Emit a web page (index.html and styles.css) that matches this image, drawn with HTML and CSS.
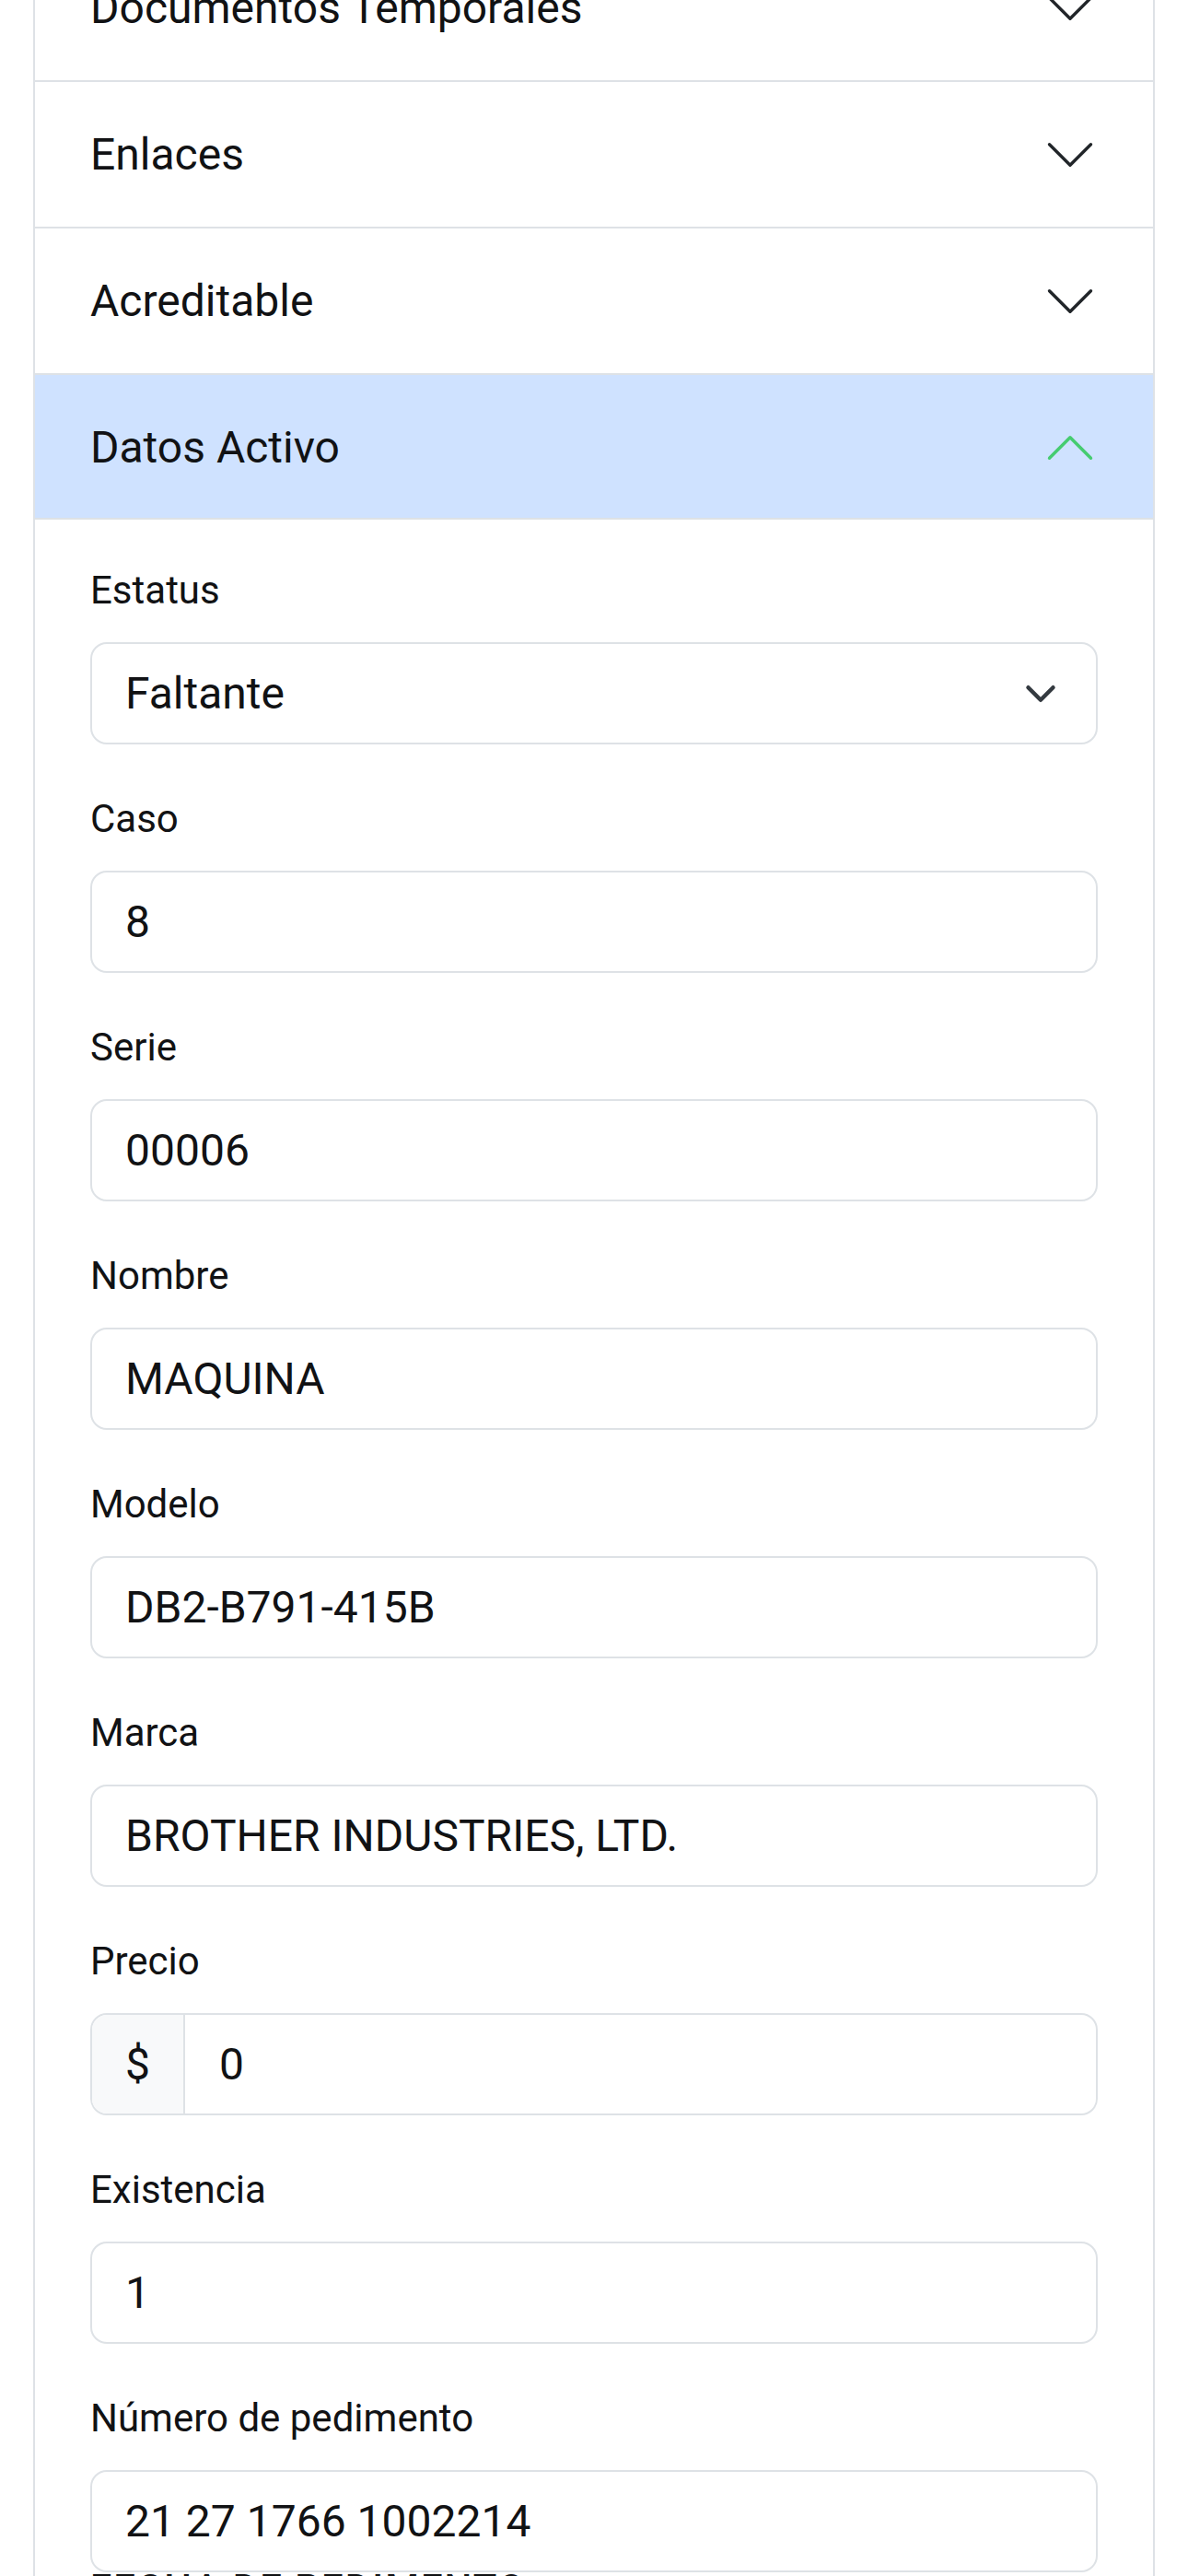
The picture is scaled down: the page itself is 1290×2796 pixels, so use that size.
FILE: index.html
```html
<!DOCTYPE html>
<html lang="es">
<head>
<meta charset="utf-8">
<title>Datos Activo</title>
<link rel="stylesheet" href="styles.css">
</head>
<body>
<div class="accordion">
  <div class="acc-item">
    <button class="acc-header"><span>Documentos Temporales</span>
      <svg class="chev" viewBox="0 0 16 16" fill="none" stroke="#212529" stroke-width="0.9" stroke-linecap="round" stroke-linejoin="round"><path d="M2 5L8 11L14 5"/></svg>
    </button>
  </div>
  <div class="acc-item">
    <button class="acc-header"><span>Enlaces</span>
      <svg class="chev" viewBox="0 0 16 16" fill="none" stroke="#212529" stroke-width="0.9" stroke-linecap="round" stroke-linejoin="round"><path d="M2 5L8 11L14 5"/></svg>
    </button>
  </div>
  <div class="acc-item">
    <button class="acc-header"><span>Acreditable</span>
      <svg class="chev" viewBox="0 0 16 16" fill="none" stroke="#212529" stroke-width="0.9" stroke-linecap="round" stroke-linejoin="round"><path d="M2 5L8 11L14 5"/></svg>
    </button>
  </div>
  <div class="acc-item open">
    <button class="acc-header active"><span>Datos Activo</span>
      <svg class="chev" viewBox="0 0 16 16" fill="none" stroke="#45cc70" stroke-width="0.9" stroke-linecap="round" stroke-linejoin="round"><path d="M2 11L8 5L14 11"/></svg>
    </button>
    <div class="acc-body">
      <div class="field">
        <label class="field-label">Estatus</label>
        <div class="control select"><span>Faltante</span>
          <svg class="select-arrow" viewBox="0 0 16 16" fill="none" stroke="#343a40" stroke-width="2" stroke-linecap="round" stroke-linejoin="round"><path d="m2 5 6 6 6-6"/></svg>
        </div>
      </div>
      <div class="field">
        <label class="field-label">Caso</label>
        <div class="control">8</div>
      </div>
      <div class="field">
        <label class="field-label">Serie</label>
        <div class="control">00006</div>
      </div>
      <div class="field">
        <label class="field-label">Nombre</label>
        <div class="control">MAQUINA</div>
      </div>
      <div class="field">
        <label class="field-label">Modelo</label>
        <div class="control">DB2-B791-415B</div>
      </div>
      <div class="field">
        <label class="field-label">Marca</label>
        <div class="control">BROTHER INDUSTRIES, LTD.</div>
      </div>
      <div class="field">
        <label class="field-label">Precio</label>
        <div class="control group">
          <span class="addon">$</span>
          <span class="group-value">0</span>
        </div>
      </div>
      <div class="field">
        <label class="field-label">Existencia</label>
        <div class="control">1</div>
      </div>
      <div class="field last">
        <label class="field-label">Número de pedimento</label>
        <div class="control">21 27 1766 1002214</div>
      </div>
      <div class="cutoff"><span>FECHA DE PEDIMENTO</span></div>
    </div>
  </div>
</div>
</body>
</html>
```

FILE: styles.css
```css
html, body {
  margin: 0;
  padding: 0;
  background: #ffffff;
}

body {
  font-family: Roboto, "Noto Sans", "Liberation Sans", sans-serif;
  color: #111214;
  overflow: hidden;
}

.accordion {
  margin: -70px 36px 0;
  border-left: 2px solid #dee2e6;
  border-right: 2px solid #dee2e6;
}

.acc-item {
  border-bottom: 2px solid #dee2e6;
}

.acc-item.open {
  border-bottom: none;
}

.acc-header {
  display: flex;
  align-items: center;
  justify-content: space-between;
  width: 100%;
  height: 157px;
  box-sizing: border-box;
  padding: 0 60px;
  margin: 0;
  border: 0;
  background: #ffffff;
  font-family: inherit;
  font-size: 48px;
  font-weight: 400;
  line-height: 1.5;
  color: #111214;
  text-align: left;
}

.acc-header.active {
  background: #cfe2ff;
  box-shadow: inset 0 -2px 0 #dee2e6;
}

.chev {
  width: 60px;
  height: 60px;
  flex: none;
}

.acc-body {
  padding: 44px 60px 0;
}

.field {
  margin-bottom: 48px;
}

.field.last {
  margin-bottom: 0;
}

.field-label {
  display: block;
  font-size: 42px;
  line-height: 66px;
  margin-bottom: 23px;
  color: #111214;
}

.control {
  display: flex;
  align-items: center;
  height: 111px;
  box-sizing: border-box;
  padding: 0 36px;
  border: 2px solid #dee2e6;
  border-radius: 18px;
  background: #ffffff;
  font-size: 48px;
  line-height: 72px;
  color: #111214;
}

.control.select {
  justify-content: space-between;
}

.select-arrow {
  width: 48px;
  height: 36px;
  flex: none;
}

.control.group {
  padding: 0;
  overflow: hidden;
}

.addon {
  display: flex;
  align-items: center;
  height: 100%;
  padding: 0 36px;
  background: #f8f9fa;
  border-right: 2px solid #dee2e6;
}

.group-value {
  padding-left: 37px;
}

.cutoff {
  margin-top: 1px;
  font-size: 42px;
  line-height: 0.8;
  font-weight: 500;
  color: #111214;
  letter-spacing: 2px;
}
```
